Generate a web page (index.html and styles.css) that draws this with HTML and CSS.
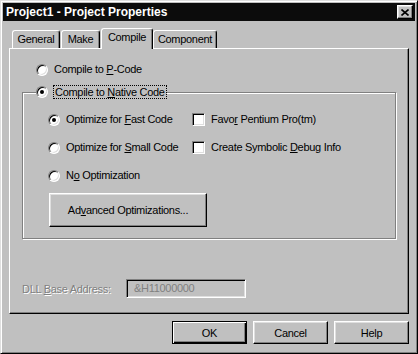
FILE: index.html
```html
<!DOCTYPE html>
<html>
<head>
    <title>Project1 - Project Properties</title>
    <link rel="stylesheet" href="styles.css">
</head>
<body>
    <div class="window">
        <div class="titlebar">
            <span class="title">Project1 - Project Properties</span>
            <span class="close">
                <svg width="8" height="7" viewBox="0 0 8 7"><path d="M0.5 0.5 L7.5 6.5 M7.5 0.5 L0.5 6.5" stroke="#000" stroke-width="1.6" fill="none"/></svg>
            </span>
        </div>

        <div class="content">
            <div class="tabs">
                <div class="tab tab-general">General</div>
                <div class="tab tab-make">Make</div>
                <div class="tab tab-compile selected">Compile</div>
                <div class="tab tab-component">Component</div>
            </div>

            <div class="panel">
                <div class="option option-top">
                    <span class="radio"></span>
                    <span class="label">Compile to <u>P</u>-Code</span>
                </div>

                <fieldset class="group">
                    <legend class="option">
                        <span class="radio checked"></span>
                        <span class="label focus">Compile to <u>N</u>ative Code</span>
                    </legend>
                    <div class="group-body">
                        <div class="group-grid">
                            <div class="option"><span class="radio checked"></span><span class="label">Optimize for <u>F</u>ast Code</span></div>
                            <div class="option"><span class="check"></span><span class="label">Favo<u>r</u> Pentium Pro(tm)</span></div>
                            <div class="option"><span class="radio"></span><span class="label">Optimize for <u>S</u>mall Code</span></div>
                            <div class="option"><span class="check"></span><span class="label">Create Symbolic <u>D</u>ebug Info</span></div>
                            <div class="option"><span class="radio"></span><span class="label">N<u>o</u> Optimization</span></div>
                        </div>
                        <button class="btn btn-wide">Ad<u>v</u>anced Optimizations...</button>
                    </div>
                </fieldset>

                <div class="dll-row">
                    <span class="dll-label disabled">DLL <u>B</u>ase Address:</span>
                    <div class="textbox">&amp;H11000000</div>
                </div>
            </div>

            <div class="buttons">
                <button class="btn btn-default">OK</button>
                <button class="btn">Cancel</button>
                <button class="btn">Help</button>
            </div>
        </div>
    </div>
</body>
</html>
```

FILE: styles.css
```css
body {
    margin: 0;
    background: #c0c0c0;
    font-family: "Liberation Sans", Arial, sans-serif;
    font-size: 11px;
    letter-spacing: -0.3px;
    color: #000;
}
u {
    text-decoration: underline;
    text-underline-offset: 1px;
}
.window {
    width: 418px;
    height: 354px;
    box-sizing: border-box;
    padding: 2px;
    background: #c0c0c0;
    border: 1px solid;
    border-color: #dfdfdf #000 #000 #dfdfdf;
    box-shadow: inset 1px 1px #fff, inset -1px -1px #808080;
}
.titlebar {
    height: 18px;
    background: #0c0c0c;
    display: flex;
    align-items: center;
    padding: 0 2px 0 3px;
}
.title {
    color: #fff;
    font-weight: bold;
    font-size: 12px;
    letter-spacing: 0;
}
.close {
    margin-left: auto;
    width: 16px;
    height: 14px;
    box-sizing: border-box;
    background: #c0c0c0;
    border: 1px solid;
    border-color: #fff #000 #000 #fff;
    box-shadow: inset -1px -1px #808080, inset 1px 1px #dfdfdf;
    display: flex;
    align-items: center;
    justify-content: center;
}
.close svg {
    display: block;
}
.content {
    padding: 0 6px;
}

/* tabs */
.tabs {
    height: 27px;
    display: flex;
    align-items: flex-end;
    padding-left: 3px;
}
.tab {
    height: 18px;
    box-sizing: border-box;
    border: 1px solid;
    border-color: #fff #000 transparent #fff;
    border-bottom: none;
    border-radius: 3px 3px 0 0;
    box-shadow: inset -1px 0 #808080;
    background: #c0c0c0;
    text-align: center;
    line-height: 16px;
    margin-right: 1px;
}
.tab-general { width: 48px; }
.tab-make { width: 39px; }
.tab-compile { width: 52px; }
.tab-component { width: 64px; }
.tab.selected {
    height: 21px;
    margin-bottom: -1px;
    margin-right: 0;
    line-height: 16px;
    position: relative;
    z-index: 1;
}
.panel {
    height: 266px;
    box-sizing: border-box;
    border: 1px solid;
    border-color: #fff #000 #000 #fff;
    box-shadow: inset -1px -1px #808080;
    padding: 14px 12px 0;
}

/* radios and checks */
.option {
    display: flex;
    align-items: center;
    height: 13px;
}
.option-top {
    margin-left: 14px;
}
.radio {
    width: 12px;
    height: 12px;
    box-sizing: border-box;
    border-radius: 50%;
    background: #fff;
    border: 1px solid;
    border-color: #808080 #fff #fff #808080;
    box-shadow: inset 1px 1px #000, inset -1px -1px #dfdfdf;
    display: flex;
    align-items: center;
    justify-content: center;
    flex: none;
}
.radio.checked::after {
    content: "";
    width: 4px;
    height: 4px;
    border-radius: 50%;
    background: #000;
}
.check {
    width: 13px;
    height: 13px;
    box-sizing: border-box;
    background: #fff;
    border: 1px solid;
    border-color: #808080 #fff #fff #808080;
    box-shadow: inset 1px 1px #000, inset -1px -1px #dfdfdf;
    flex: none;
}
.label {
    margin-left: 6px;
    line-height: 13px;
    white-space: nowrap;
}
.focus {
    margin-left: 5px;
    padding: 0 1px;
    border: 1px dotted #000;
    line-height: 12px;
}

/* group box */
.group {
    margin: 9px 0 0;
    padding: 14px 0 11px 13px;
    border: 1px solid #808080;
    box-shadow: inset 1px 1px #fff, 1px 1px #fff;
    min-width: 0;
}
.group legend {
    padding: 0;
    height: 14px;
    background: #c0c0c0;
}
.group-body {
    margin-left: 12px;
}
.group-grid {
    display: grid;
    grid-template-columns: 144px auto;
    row-gap: 15px;
}
.btn {
    font: inherit;
    letter-spacing: inherit;
    color: #000;
    background: #c0c0c0;
    border: 1px solid;
    border-color: #fff #000 #000 #fff;
    box-shadow: inset -1px -1px #808080, inset 1px 1px #dfdfdf;
    width: 75px;
    height: 23px;
    padding: 0;
    border-radius: 0;
}
.btn-wide {
    display: block;
    width: 158px;
    height: 34px;
    margin: 11px 0 0 1px;
}
.btn-default {
    border-color: #000;
    box-shadow: inset 1px 1px #fff, inset -1px -1px #000, inset -2px -2px #808080;
}

/* dll address */
.dll-row {
    margin-top: 40px;
    display: flex;
    align-items: center;
}
.disabled {
    color: #808080;
    text-shadow: 1px 1px 0 #fff;
}
.dll-label {
    width: 104px;
}
.textbox {
    width: 120px;
    height: 19px;
    box-sizing: border-box;
    border: 1px solid;
    border-color: #808080 #fff #fff #808080;
    box-shadow: inset 1px 1px #000, inset -1px -1px #dfdfdf;
    color: #808080;
    line-height: 17px;
    padding-left: 7px;
}

.buttons {
    margin-top: 7px;
    display: flex;
    justify-content: flex-end;
    gap: 6px;
}
```
